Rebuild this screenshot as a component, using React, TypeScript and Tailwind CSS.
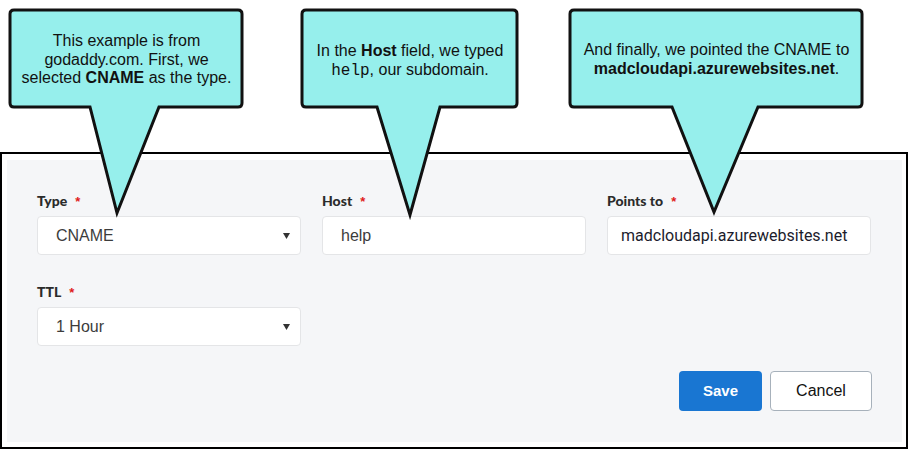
const label = "text-[14px] leading-4 font-black text-[#2b2b2b] font-['Lato','Liberation_Sans',sans-serif]"

function Label({ text }: { text: string }) {
  return (
    <div className={label}>
      {text}
      <span className="ml-[8px] font-['Liberation_Sans',sans-serif] text-[13px] font-bold text-[#e01b1b]">*</span>
    </div>
  )
}

function Caret() {
  return (
    <svg width="7" height="6" viewBox="0 0 7 6" className="mr-[6px]">
      <path d="M0 0 H7 L3.5 6 Z" fill="#333" />
    </svg>
  )
}

function Field({ name, value, select, mono }: { name: string; value: string; select?: boolean; mono?: boolean }) {
  return (
    <div className="flex flex-col gap-[6px]">
      <Label text={name} />
      <div className="flex h-[39px] items-center justify-between rounded-[4px] border border-[#e4e5e7] bg-white pl-[18px] pr-[4px]">
        <span
          className={
            mono
              ? "font-['Roboto',sans-serif] text-[16px] text-[#1c1c2c] -ml-[5px]"
              : "font-['Liberation_Sans',Arial,sans-serif] text-[16px] text-[#3c3c3c]"
          }
        >
          {value}
        </span>
        {select && <Caret />}
      </div>
    </div>
  )
}

function Callouts() {
  return (
    <svg className="pointer-events-none absolute left-0 top-0" width="910" height="450">
      <g fill="#96efec" stroke="#111" strokeWidth="3" strokeLinejoin="miter">
        <path d="M14 10 H238 Q242 10 242 14 V103 Q242 107 238 107 H159 L117 213 L90 107 H14 Q10 107 10 103 V14 Q10 10 14 10 Z" />
        <path d="M306 10 H513 Q517 10 517 14 V103 Q517 107 513 107 H440 L410 215 L377 107 H306 Q302 107 302 103 V14 Q302 10 306 10 Z" />
        <path d="M574 10 H858 Q862 10 862 14 V103 Q862 107 858 107 H758 L714 212 L672 107 H574 Q570 107 570 103 V14 Q570 10 574 10 Z" />
      </g>
    </svg>
  )
}

const bubble = "absolute text-center text-[16px] leading-[18.5px] text-[#111] font-['Liberation_Sans',Arial,sans-serif]"

export default function App() {
  return (
    <div className="relative h-[450px] w-[910px] overflow-hidden bg-white">
      <div className="mt-[152px] h-[297px] w-[908px] border-2 border-black pb-[5px] pl-[5px] pr-[4px] pt-[6px]">
        <div className="h-full bg-[#f5f6f8] px-[30px] pt-[33px]">
          <div className="grid grid-cols-[264px_264px_264px] gap-x-[21px]">
            <Field name="Type" value="CNAME" select />
            <Field name="Host" value="help" />
            <Field name="Points to" value="madcloudapi.azurewebsites.net" mono />
          </div>
          <div className="mt-[29px] w-[264px]">
            <Field name="TTL" value="1 Hour" select />
          </div>
          <div className="mt-[25px] flex justify-end gap-[8px] font-['Liberation_Sans',Arial,sans-serif]">
            <button className="h-[40px] w-[83px] rounded-[4px] bg-[#1976d2] text-[15px] font-bold text-white">Save</button>
            <button className="h-[40px] w-[102px] rounded-[4px] border border-[#a7b1bb] bg-white text-[16px] text-[#111]">Cancel</button>
          </div>
        </div>
      </div>

      <Callouts />

      <div className={bubble + " left-[12px] top-[32px] w-[229px]"}>
        This example is from
        <br />
        godaddy.com. First, we
        <br />
        selected <b>CNAME</b> as the type.
      </div>
      <div className={bubble + " left-[304px] top-[42px] w-[212px]"}>
        In the <b>Host</b> field, we typed
        <br />
        <span className="font-['Liberation_Mono','Courier_New',monospace]">help</span>, our subdomain.
      </div>
      <div className={bubble + " left-[572px] top-[41px] w-[289px]"}>
        And finally, we pointed the CNAME to
        <br />
        <b>madcloudapi.azurewebsites.net</b>.
      </div>
    </div>
  )
}
